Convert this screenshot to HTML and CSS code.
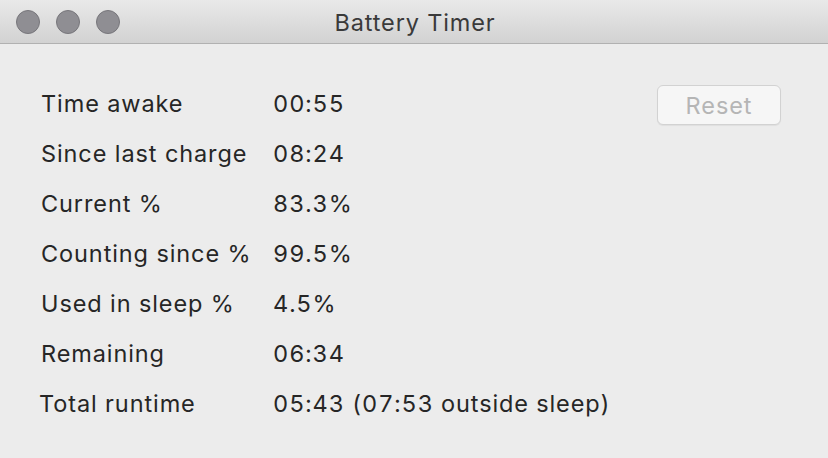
FILE: index.html
```html
<!DOCTYPE html>
<html>
<head>
<meta charset="utf-8">
<link rel="stylesheet" href="styles.css">
</head>
<body>
<div class="window">
  <div class="titlebar">
    <div class="lights">
      <span class="light"></span>
      <span class="light"></span>
      <span class="light"></span>
    </div>
    <div class="title">Battery Timer</div>
  </div>
  <div class="content">
    <div class="table">
      <div class="label">Time awake</div><div class="value">00:55</div>
      <div class="label">Since last charge</div><div class="value">08:24</div>
      <div class="label">Current %</div><div class="value">83.3%</div>
      <div class="label">Counting since %</div><div class="value">99.5%</div>
      <div class="label">Used in sleep %</div><div class="value">4.5%</div>
      <div class="label">Remaining</div><div class="value">06:34</div>
      <div class="label last">Total runtime</div><div class="value">05:43 (07:53 outside sleep)</div>
    </div>
    <button class="reset" disabled>Reset</button>
  </div>
</div>
</body>
</html>
```
FILE: styles.css
```css
html, body {
  margin: 0;
  padding: 0;
  width: 828px;
  height: 458px;
  overflow: hidden;
  background: #ececec;
}
.window {
  width: 828px;
  height: 458px;
  display: flex;
  flex-direction: column;
  font-family: "Inter", "Noto Sans", sans-serif;
  color: #262626;
}
.titlebar {
  height: 43px;
  flex: none;
  position: relative;
  background: linear-gradient(#e9e9e9, #d2d2d2);
  border-bottom: 1px solid #b1b1b1;
  display: flex;
  align-items: center;
  justify-content: center;
}
.lights {
  position: absolute;
  left: 16px;
  top: 10px;
  display: flex;
  gap: 16px;
}
.light {
  width: 22px;
  height: 22px;
  border-radius: 50%;
  background: #8f8e93;
  border: 1px solid #77767b;
}
.title {
  font-size: 23.5px;
  letter-spacing: 0.85px;
  color: #3a3a3a;
  margin-left: 2px;
  padding-top: 2px;
}
.content {
  flex: 1;
  display: flex;
  justify-content: space-between;
  align-items: flex-start;
  padding: 35px 47px 0 41px;
}
.table {
  display: grid;
  grid-template-columns: 232px auto;
  grid-auto-rows: 50px;
  font-size: 23.5px;
  letter-spacing: 0.9px;
  line-height: 50px;
}
.value {
  font-variant-numeric: tabular-nums;
}
.label.last {
  margin-left: -2px;
}
.reset {
  margin-top: 6px;
  width: 124px;
  height: 40px;
  background: #f6f6f6;
  border: 1px solid #d2d2d2;
  border-radius: 6px;
  font-family: "Inter", "Noto Sans", sans-serif;
  font-size: 23.5px;
  letter-spacing: 0.9px;
  color: #b5b5b5;
  box-shadow: 0 1px 1px rgba(0,0,0,0.06);
  padding: 0;
}
```
